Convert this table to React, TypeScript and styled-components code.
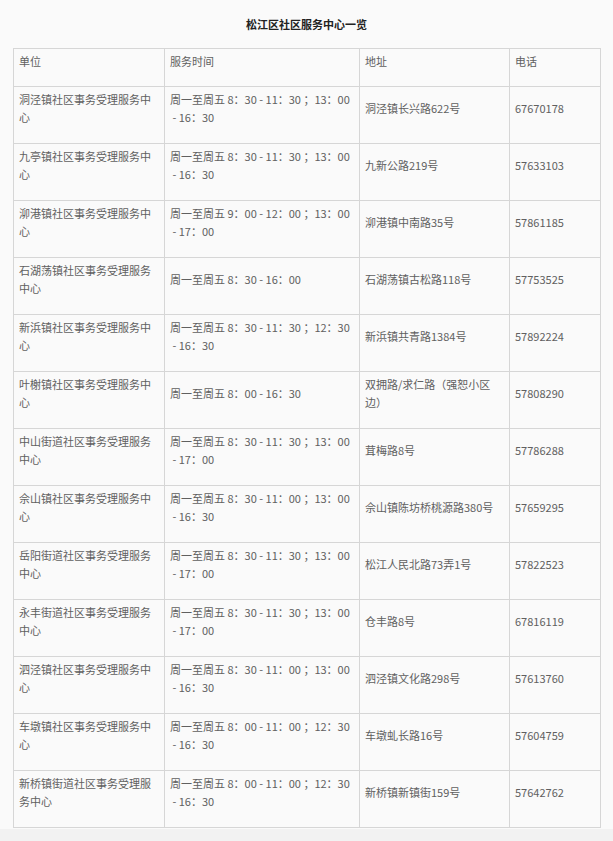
import React from "react";
import styled, { createGlobalStyle } from "styled-components";

const GlobalStyle = createGlobalStyle`
  html, body {
    margin: 0;
    padding: 0;
    background: #f2f2f2;
  }
  body {
    font-family: "Noto Sans CJK SC", "Noto Sans", sans-serif;
  }
`;

const Page = styled.div`
  background: #fafafa;
  padding: 15px 13px 1px;
  width: 613px;
  box-sizing: border-box;
`;

const Title = styled.h1`
  margin: 0 0 15px;
  font-size: 11px;
  line-height: 18px;
  font-weight: 700;
  color: #222;
  text-align: center;
`;

const Table = styled.table`
  width: 587px;
  table-layout: fixed;
  border-collapse: collapse;
  font-size: 11px;
  line-height: 18px;
  color: #606060;
`;

const Th = styled.th`
  border: 1px solid #d6d6d6;
  padding: 3px 5px 16px;
  text-align: left;
  font-weight: 400;
  vertical-align: top;
`;

const Td = styled.td`
  border: 1px solid #d6d6d6;
  padding: 3px 5px 17px;
  vertical-align: middle;
  word-break: break-all;
`;

type Row = { unit: string; time: string; addr: string; tel: string };

const NB = "\u00a0";

const rows: Row[] = [
  { unit: "洞泾镇社区事务受理服务中心", time: `周一至周五 8：30 - 11：30 ；13：00 ${NB}- 16：30`, addr: "洞泾镇长兴路622号", tel: "67670178" },
  { unit: "九亭镇社区事务受理服务中心", time: `周一至周五 8：30 - 11：30 ；13：00 ${NB}- 16：30`, addr: "九新公路219号", tel: "57633103" },
  { unit: "泖港镇社区事务受理服务中心", time: `周一至周五 9：00 - 12：00 ；13：00 ${NB}- 17：00`, addr: "泖港镇中南路35号", tel: "57861185" },
  { unit: "石湖荡镇社区事务受理服务中心", time: "周一至周五 8：30 - 16：00", addr: "石湖荡镇古松路118号", tel: "57753525" },
  { unit: "新浜镇社区事务受理服务中心", time: `周一至周五 8：30 - 11：30 ；12：30 ${NB}- 16：30`, addr: "新浜镇共青路1384号", tel: "57892224" },
  { unit: "叶榭镇社区事务受理服务中心", time: "周一至周五 8：00 - 16：30", addr: "双拥路/求仁路（强恕小区边）", tel: "57808290" },
  { unit: "中山街道社区事务受理服务中心", time: `周一至周五 8：30 - 11：30 ；13：00 ${NB}- 17：00`, addr: "茸梅路8号", tel: "57786288" },
  { unit: "佘山镇社区事务受理服务中心", time: `周一至周五 8：30 - 11：00 ；13：00 ${NB}- 16：30`, addr: "佘山镇陈坊桥桃源路380号", tel: "57659295" },
  { unit: "岳阳街道社区事务受理服务中心", time: `周一至周五 8：30 - 11：30 ；13：00 ${NB}- 17：00`, addr: "松江人民北路73弄1号", tel: "57822523" },
  { unit: "永丰街道社区事务受理服务中心", time: `周一至周五 8：30 - 11：30 ；13：00 ${NB}- 17：00`, addr: "仓丰路8号", tel: "67816119" },
  { unit: "泗泾镇社区事务受理服务中心", time: `周一至周五 8：30 - 11：00 ；13：00 ${NB}- 16：30`, addr: "泗泾镇文化路298号", tel: "57613760" },
  { unit: "车墩镇社区事务受理服务中心", time: `周一至周五 8：00 - 11：00 ；12：30 ${NB}- 16：30`, addr: "车墩虬长路16号", tel: "57604759" },
  { unit: "新桥镇街道社区事务受理服务中心", time: `周一至周五 8：00 - 11：00 ；12：30 ${NB}- 16：30`, addr: "新桥镇新镇街159号", tel: "57642762" },
];

export default function App() {
  return (
    <>
      <GlobalStyle />
      <Page>
        <Title>松江区社区服务中心一览</Title>
        <Table>
          <colgroup>
            <col style={{ width: 151 }} />
            <col style={{ width: 195 }} />
            <col style={{ width: 150 }} />
            <col style={{ width: 91 }} />
          </colgroup>
          <thead>
            <tr>
              <Th>单位</Th>
              <Th>服务时间</Th>
              <Th>地址</Th>
              <Th>电话</Th>
            </tr>
          </thead>
          <tbody>
            {rows.map((r, i) => (
              <tr key={i}>
                <Td>{r.unit}</Td>
                <Td>{r.time}</Td>
                <Td>{r.addr}</Td>
                <Td>{r.tel}</Td>
              </tr>
            ))}
          </tbody>
        </Table>
      </Page>
    </>
  );
}
